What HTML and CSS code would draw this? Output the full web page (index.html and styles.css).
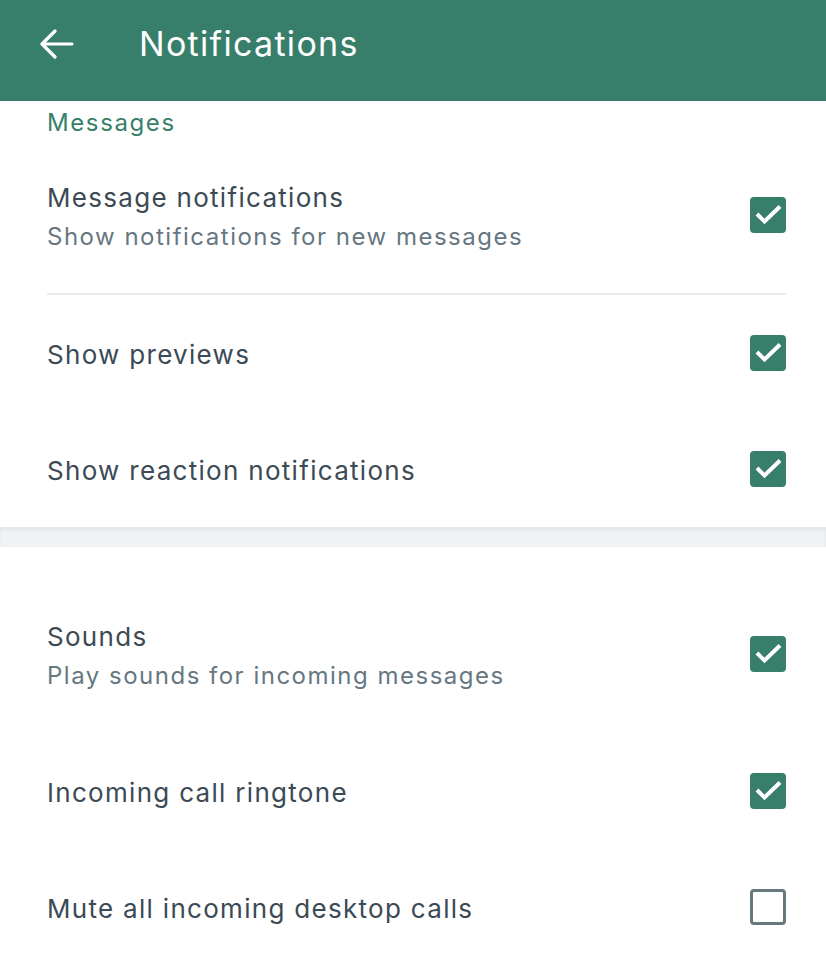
FILE: index.html
```html
<!DOCTYPE html>
<html lang="en">
<head>
<meta charset="utf-8">
<title>Notifications</title>
<link rel="stylesheet" href="styles.css">
</head>
<body>
<header class="topbar">
  <button class="back" aria-label="Back">
    <svg width="34" height="30" viewBox="0 0 34 30"><path d="M2 15 H32 M15 2 L2 15 L15 28" fill="none" stroke="#fff" stroke-width="3.2" stroke-linecap="round" stroke-linejoin="round"/></svg>
  </button>
  <h1 class="title">Notifications</h1>
</header>
<main>
  <section class="section">
    <div class="section-label">Messages</div>
    <div class="row two divided">
      <div class="text">
        <div class="row-title">Message notifications</div>
        <div class="row-sub">Show notifications for new messages</div>
      </div>
      <span class="cb checked"><svg viewBox="0 0 36 36" width="36" height="36"><path d="M7 17 L14.5 24.5 L30 9.5" fill="none" stroke="#fff" stroke-width="4"/></svg></span>
    </div>
    <div class="row">
      <div class="text"><div class="row-title">Show previews</div></div>
      <span class="cb checked"><svg viewBox="0 0 36 36" width="36" height="36"><path d="M7 17 L14.5 24.5 L30 9.5" fill="none" stroke="#fff" stroke-width="4"/></svg></span>
    </div>
    <div class="row">
      <div class="text"><div class="row-title">Show reaction notifications</div></div>
      <span class="cb checked"><svg viewBox="0 0 36 36" width="36" height="36"><path d="M7 17 L14.5 24.5 L30 9.5" fill="none" stroke="#fff" stroke-width="4"/></svg></span>
    </div>
  </section>
  <div class="band"></div>
  <section class="section second">
    <div class="row two">
      <div class="text">
        <div class="row-title">Sounds</div>
        <div class="row-sub">Play sounds for incoming messages</div>
      </div>
      <span class="cb checked"><svg viewBox="0 0 36 36" width="36" height="36"><path d="M7 17 L14.5 24.5 L30 9.5" fill="none" stroke="#fff" stroke-width="4"/></svg></span>
    </div>
    <div class="row">
      <div class="text"><div class="row-title">Incoming call ringtone</div></div>
      <span class="cb checked"><svg viewBox="0 0 36 36" width="36" height="36"><path d="M7 17 L14.5 24.5 L30 9.5" fill="none" stroke="#fff" stroke-width="4"/></svg></span>
    </div>
    <div class="row">
      <div class="text"><div class="row-title">Mute all incoming desktop calls</div></div>
      <span class="cb"></span>
    </div>
  </section>
</main>
</body>
</html>
```
FILE: styles.css
```css
* { box-sizing: border-box; }
html, body { margin: 0; padding: 0; }
body {
  width: 826px;
  height: 958px;
  overflow: hidden;
  background: #fff;
  font-family: Inter, "Noto Sans", "Liberation Sans", sans-serif;
  color: #3b4a54;
}
.topbar {
  height: 101px;
  background: #377f6a;
  display: flex;
  align-items: center;
  padding-left: 40px;
}
.back {
  background: none;
  border: 0;
  padding: 0;
  width: 34px;
  height: 30px;
  display: flex;
  margin-top: -14px;
}
.title {
  margin: 0 0 0 65px;
  font-weight: 400;
  font-size: 34px;
  letter-spacing: 1.3px;
  color: #fff;
  margin-top: -15px;
}
.section { padding: 0 40px 0 47px; }
.section-label {
  height: 36px;
  padding-top: 7px;
  font-size: 24px;
  line-height: 30px;
  letter-spacing: 1.6px;
  color: #377f6a;
}
.row {
  height: 116px;
  display: flex;
  align-items: center;
  justify-content: space-between;
}
.row.two { height: 158px; }
.row.divided { border-bottom: 2px solid #e9edef; }
.text { padding-top: 4px; }
.row-title { font-size: 26px; line-height: 40px; letter-spacing: 1.3px; color: #3b4a54; }
.row-sub { font-size: 24px; line-height: 38px; letter-spacing: 1.5px; color: #667781; }
.cb {
  width: 36px;
  height: 36px;
  border-radius: 4px;
  border: 3px solid #697780;
  display: block;
  flex-shrink: 0;
}
.cb.checked { background: #377f6a; border: 0; }
.cb svg { display: block; }
.band {
  height: 20px;
  background: #f0f2f5;
  box-shadow: inset 0 2px 3px rgba(0,0,0,0.06);
  border-top: 1px solid #e4e6ea;
}
.second { padding-top: 28px; }
```
